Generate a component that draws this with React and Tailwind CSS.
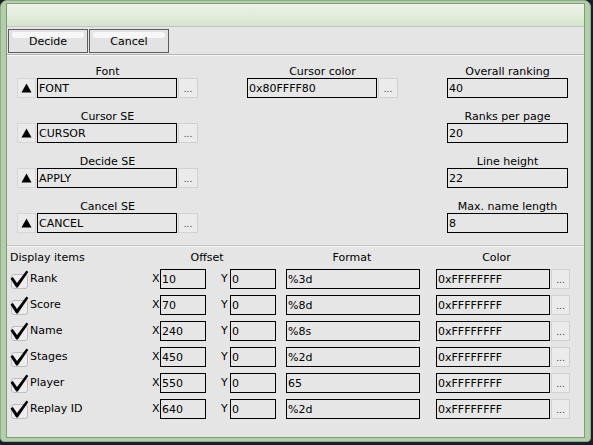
import React from 'react';

function Dots({ w = 'w-[20px]' }) {
  return (
    <div className={`${w} h-[20px] border border-[#d2d2d2] bg-[#ebebeb] flex items-center justify-center text-[9px] leading-none text-[#333] pt-[2px]`}>
      ...
    </div>
  );
}

function Field({ value, w }) {
  return (
    <div className={`${w} h-[20px] border border-black bg-[#e6e6e6] flex items-center pl-px leading-none whitespace-nowrap overflow-hidden`}>
      {value}
    </div>
  );
}

function UpButton() {
  return (
    <div className="w-[19px] h-[20px] border border-[#d6d6d6] bg-[#eaeaea] flex items-center justify-center">
      <svg width="11" height="10" viewBox="0 0 11 10">
        <polygon points="5.5,0.5 10.5,9.5 0.5,9.5" fill="#000" />
      </svg>
    </div>
  );
}

function Labeled({ label, children }) {
  return (
    <div className="flex flex-col">
      <div className="h-[15px] leading-[18px] text-center">{label}</div>
      <div className="flex items-center">{children}</div>
    </div>
  );
}

function FileRow({ label, value }) {
  return (
    <Labeled label={label}>
      <UpButton />
      <div className="ml-px"><Field value={value} w="w-[140px]" /></div>
      <div className="ml-px"><Dots /></div>
    </Labeled>
  );
}

function Check() {
  return (
    <svg width="19" height="20" viewBox="0 0 19 20">
      <rect x="1.5" y="5.5" width="16" height="14" rx="2.5" fill="#ededed" stroke="#bdbdbd" />
      <polygon points="0.5,9.5 2.8,8 7,14 16.5,1.5 18.3,3 7.8,18.5 6.2,18.5" fill="#000" />
    </svg>
  );
}

function ItemRow({ name, x, y, format }) {
  return (
    <div className="flex items-center h-[20px]">
      <div className="w-[19px] h-[20px]"><Check /></div>
      <div className="w-[123px] pl-px">{name}</div>
      <div className="w-[8px]">X</div>
      <Field value={x} w="w-[46px]" />
      <div className="w-[9px] ml-[15px]">Y</div>
      <Field value={y} w="w-[46px]" />
      <div className="ml-[10px]"><Field value={format} w="w-[134px]" /></div>
      <div className="ml-[16px]"><Field value="0xFFFFFFFF" w="w-[114px]" /></div>
      <div className="ml-px"><Dots w="w-[19px]" /></div>
    </div>
  );
}

function GlossButton({ children }) {
  return (
    <div className="relative w-[80px] h-[24px] border border-[#5c5c5c] bg-[#e3e3e3] flex items-center justify-center pt-[2px]">
      <div className="absolute left-[3px] right-[3px] top-[2px] h-[6px] rounded-full bg-[#f7f7f7]" />
      <span className="relative">{children}</span>
    </div>
  );
}

export default function App() {
  const items = [
    ['Rank', '10', '0', '%3d'],
    ['Score', '70', '0', '%8d'],
    ['Name', '240', '0', '%8s'],
    ['Stages', '450', '0', '%2d'],
    ['Player', '550', '0', '65'],
    ['Replay ID', '640', '0', '%2d'],
  ];

  return (
    <div className="w-[593px] h-[445px] bg-[#1c1c2a] overflow-hidden font-['DejaVu_Sans',sans-serif] text-[11px] text-black">
      <div className="w-[591px] h-[442px] rounded-t-[7px] rounded-b-[4px] border border-[#8cad85] bg-[#b3cfaa] pt-[2px] pl-[5px] pr-[5px] pb-[3px] flex">
        <div className="flex-1 border border-[#7f9c79] bg-[#e5e5e5] flex flex-col">

          {/* title bar */}
          <div className="h-[23px] bg-gradient-to-b from-[#edf3e9] to-[#d6e5cd] border-b border-[#c3c3c3]" />

          {/* toolbar */}
          <div className="flex pl-px pt-[2px] h-[28px] border-b border-[#b5b5b5]">
            <GlossButton>Decide</GlossButton>
            <div className="ml-px"><GlossButton>Cancel</GlossButton></div>
          </div>
          <div className="h-px bg-[#f8f8f8]" />

          {/* settings */}
          <div className="flex pl-[10px] pt-[7px]">
            <div className="flex flex-col gap-[10px] w-[181px]">
              <FileRow label="Font" value="FONT" />
              <FileRow label="Cursor SE" value="CURSOR" />
              <FileRow label="Decide SE" value="APPLY" />
              <FileRow label="Cancel SE" value="CANCEL" />
            </div>
            <div className="ml-[49px] w-[151px]">
              <Labeled label="Cursor color">
                <Field value="0x80FFFF80" w="w-[130px]" />
                <div className="ml-px"><Dots /></div>
              </Labeled>
            </div>
            <div className="ml-[49px] w-[121px] flex flex-col gap-[10px]">
              <Labeled label="Overall ranking"><Field value="40" w="w-[121px]" /></Labeled>
              <Labeled label="Ranks per page"><Field value="20" w="w-[121px]" /></Labeled>
              <Labeled label="Line height"><Field value="22" w="w-[121px]" /></Labeled>
              <Labeled label="Max. name length"><Field value="8" w="w-[121px]" /></Labeled>
            </div>
          </div>

          <div className="mt-[12px] h-px bg-[#c4c4c4]" />
          <div className="h-px bg-[#f4f4f4]" />

          {/* display items */}
          <div className="pl-[3px] pt-[3px] flex flex-col">
            <div className="flex h-[14px] leading-[16px]">
              <div className="w-[142px]">Display items</div>
              <div className="w-[110px] text-center">Offset</div>
              <div className="w-[180px] text-center">Format</div>
              <div className="w-[109px] text-center">Color</div>
            </div>
            <div className="mt-[5px] flex flex-col gap-[6px]">
              {items.map(([n, x, y, f]) => (
                <ItemRow key={n} name={n} x={x} y={y} format={f} />
              ))}
            </div>
          </div>

        </div>
      </div>
    </div>
  );
}
